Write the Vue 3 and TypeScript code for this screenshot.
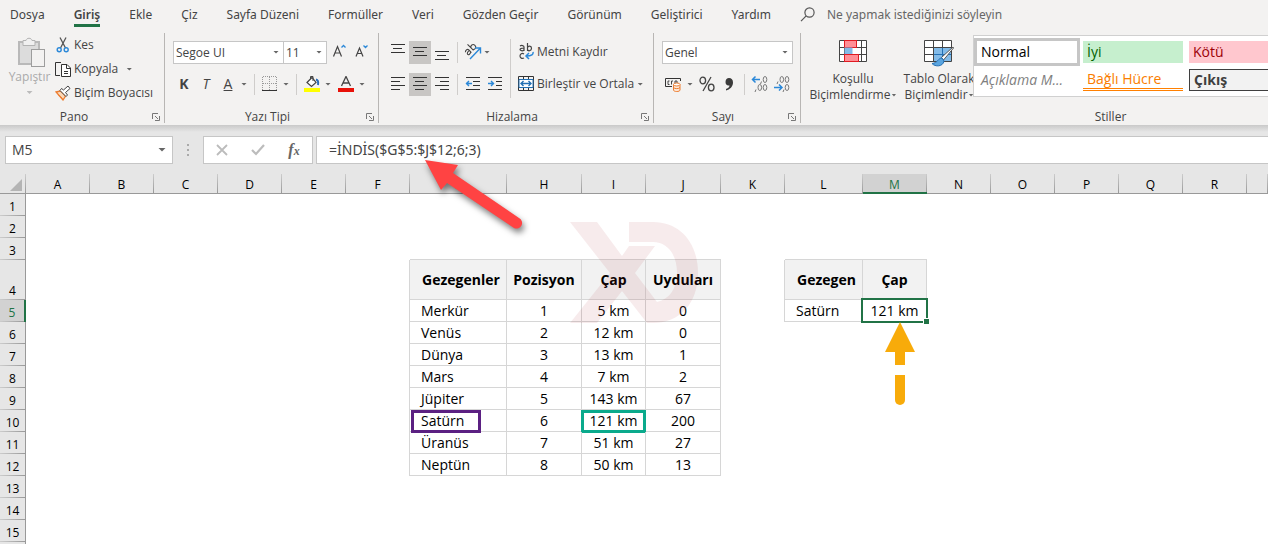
<script setup lang="ts">
import { ref } from 'vue'

const tabs: string[] = [
  'Dosya', 'Giriş', 'Ekle', 'Çiz', 'Sayfa Düzeni', 'Formüller', 'Veri',
  'Gözden Geçir', 'Görünüm', 'Geliştirici', 'Yardım',
]
const activeTab = ref('Giriş')

const nameBox = ref('M5')
const formula = ref('=İNDİS($G$5:$J$12;6;3)')

const columns = 'ABCDEFGHIJKLMNOPQRS'.split('')
const rowCount = 16

const cells: Record<string, string> = {
  G4: 'Gezegenler', H4: 'Pozisyon', I4: 'Çap', J4: 'Uyduları',
  L4: 'Gezegen', M4: 'Çap', L5: 'Satürn', M5: '121 km',
}
const planets: [string, number, string, number][] = [
  ['Merkür', 1, '5 km', 0],
  ['Venüs', 2, '12 km', 0],
  ['Dünya', 3, '13 km', 1],
  ['Mars', 4, '7 km', 2],
  ['Jüpiter', 5, '143 km', 67],
  ['Satürn', 6, '121 km', 200],
  ['Üranüs', 7, '51 km', 27],
  ['Neptün', 8, '50 km', 13],
]
planets.forEach((planet, i) => {
  planet.forEach((value, j) => {
    cells['GHIJ'[j] + (5 + i)] = String(value)
  })
})

const between = (v: string, a: string, b: string) => v >= a && v <= b

function cellClasses(col: string, row: number) {
  const id = col + row
  return {
    'line-right':
      (between(col, 'F', 'J') && row >= 4 && row <= 12) ||
      (between(col, 'K', 'M') && (row === 4 || row === 5)),
    'line-bottom':
      (between(col, 'G', 'J') && row >= 3 && row <= 12) ||
      (between(col, 'L', 'M') && row >= 3 && row <= 5),
    title: row === 4 && id in cells,
    name: col === 'G' || col === 'L',
    'mark-name': id === 'G10',
    'mark-value': id === 'I10',
    selected: id === nameBox.value,
  }
}
</script>

<template>
  <div class="app">
    <nav class="tabs" aria-label="Şerit sekmeleri">
      <button
        v-for="tab in tabs"
        :key="tab"
        type="button"
        class="tab"
        :class="{ active: tab === activeTab }"
        @click="activeTab = tab"
      >{{ tab }}</button>
      <label class="tell-me">
        <svg width="16" height="16" viewBox="0 0 16 16" fill="none" stroke="#555" stroke-width="1.2">
          <circle cx="9.5" cy="5.5" r="4.6" /><path d="M6.2 8.8L1 14.2" />
        </svg>
        <input type="text" placeholder="Ne yapmak istediğinizi söyleyin" aria-label="Ne yapmak istediğinizi söyleyin">
      </label>
    </nav>

    <div class="ribbon">
      <section class="group clipboard">
        <div class="body">
          <button type="button" class="paste" disabled>
            <svg width="30" height="32" viewBox="0 0 30 32" fill="none">
              <rect x="4" y="5" width="20" height="22" fill="#dcdcdc" stroke="#b9b9b9" stroke-width="2" />
              <path d="M8 3.500H11C11.500 0.500 16.500 0.500 17 3.500H20V8.500H8Z" fill="#f0f0f0" stroke="#b3b3b3" />
              <rect x="16.500" y="12.500" width="13" height="17" fill="#f3f2f1" stroke="#9d9d9d" />
            </svg>
            <span>Yapıştır</span>
            <i class="caret"></i>
          </button>
          <div class="stack">
            <button type="button" class="cmd">
              <svg width="16" height="16" viewBox="0 0 16 16" fill="none">
                <path d="M5 0.500L10.500 11M11 0.500L5.500 11" stroke="#555" stroke-width="1.300" />
                <circle cx="4.200" cy="12.700" r="2" stroke="#2b88d8" stroke-width="1.400" />
                <circle cx="11.200" cy="12.700" r="2" stroke="#2b88d8" stroke-width="1.400" />
              </svg>
              Kes
            </button>
            <button type="button" class="cmd">
              <svg width="16" height="16" viewBox="0 0 16 16" fill="none" stroke="#333">
                <path d="M6 1.500H0.500V14.500H5" />
                <path d="M6.500 3.500H12L15.500 7V15.500H6.500Z" fill="#fff" />
                <path d="M11.500 3.500V7.500H15.500M9 10.500H13M9 12.500H13" />
              </svg>
              Kopyala <i class="caret wide"></i>
            </button>
            <button type="button" class="cmd">
              <svg width="16" height="16" viewBox="0 0 16 16" fill="none">
                <path d="M1 7L5.500 6L10.500 11L8 15Z" fill="#fbd9b8" stroke="#ed7d31" stroke-width="1.300" />
                <path d="M3 9.500L7.500 13.500" stroke="#ed7d31" />
                <path d="M5 5.500L11 11.500L12.500 10L10.500 7.500L15 3.500L13 1L8.500 5L6.500 3.500Z" fill="#fff" stroke="#444" />
              </svg>
              Biçim Boyacısı
            </button>
          </div>
        </div>
        <footer><span>Pano</span><button type="button" class="launcher" aria-label="Pano ayarları"><svg width="8" height="8" viewBox="0 0 8 8" fill="none" stroke="#777"><path d="M0.500 6V0.500H6M3 3L6 6M7.500 3V7.500H3" /></svg></button></footer>
      </section>

      <section class="group font">
        <div class="body rows">
          <div class="row">
            <span class="combo face"><select aria-label="Yazı tipi"><option>Segoe UI</option></select><i class="caret"></i></span>
            <span class="combo size"><select aria-label="Yazı boyutu"><option>11</option></select><i class="caret"></i></span>
            <button type="button" class="tool grow" aria-label="Büyüt">
              <svg width="16" height="16" viewBox="0 0 16 16" fill="none"><path d="M1.500 12.500L5.500 2.500L9.500 12.500M3 9H8" stroke="#444" stroke-width="1.200" /><path d="M9.500 3.500L11.500 1.500L13.500 3.500" stroke="#2b88d8" stroke-width="1.300" /></svg>
            </button>
            <button type="button" class="tool" aria-label="Küçült">
              <svg width="16" height="16" viewBox="0 0 16 16" fill="none"><path d="M2 12.500L5.500 4L9 12.500M3.500 9.500H7.500" stroke="#444" stroke-width="1.200" /><path d="M9.500 1.500L11.500 3.500L13.500 1.500" stroke="#2b88d8" stroke-width="1.300" /></svg>
            </button>
          </div>
          <div class="row">
            <button type="button" class="tool letter"><b>K</b></button>
            <button type="button" class="tool letter"><em>T</em></button>
            <button type="button" class="tool letter"><u>A</u></button>
            <i class="caret drop"></i>
            <i class="sep"></i>
            <button type="button" class="tool" aria-label="Kenarlıklar">
              <svg width="16" height="16" viewBox="0 0 16 16" fill="none"><path d="M1 0.500H15M0.500 1V14M14.500 1V14M7.500 1V14M1 7.500H15" stroke="#999" stroke-dasharray="1 1" /><path d="M0 14.500H15" stroke="#333" /></svg>
            </button>
            <i class="caret drop"></i>
            <i class="sep"></i>
            <button type="button" class="tool" aria-label="Dolgu rengi">
              <svg width="16" height="16" viewBox="0 0 16 16" fill="none"><path d="M3 6.500L8 1.500L12 6.500L7.500 10.500Z" fill="#fff" stroke="#444" stroke-width="1.200" /><path d="M6.500 3V0.500H9V5" stroke="#444" /><path d="M12 3.500C14.500 4 14.500 6 14 9" stroke="#2b6cb8" stroke-width="2" /><rect y="12" width="16" height="4" fill="#ff0" /></svg>
            </button>
            <i class="caret drop"></i>
            <button type="button" class="tool" aria-label="Yazı rengi">
              <svg width="16" height="16" viewBox="0 0 16 16" fill="none"><path d="M3.500 10L8 0.500L12.500 10M5 7H11" stroke="#444" stroke-width="1.300" /><rect y="12" width="16" height="4" fill="#e81109" /></svg>
            </button>
            <i class="caret drop"></i>
          </div>
        </div>
        <footer><span>Yazı Tipi</span><button type="button" class="launcher" aria-label="Yazı tipi ayarları"><svg width="8" height="8" viewBox="0 0 8 8" fill="none" stroke="#777"><path d="M0.500 6V0.500H6M3 3L6 6M7.500 3V7.500H3" /></svg></button></footer>
      </section>

      <section class="group align">
        <div class="body">
          <div class="rows">
            <div class="row">
              <button type="button" class="tool" aria-label="Üste hizala"><svg width="16" height="18" viewBox="0 0 16 18" stroke="#333"><path d="M1 1.500H15M3 5.500H12M1 9.500H15" /></svg></button>
              <button type="button" class="tool on" aria-label="Ortaya hizala"><svg width="16" height="18" viewBox="0 0 16 18" stroke="#333"><path d="M1 4.500H15M3 8.500H12M1 12.500H15" /></svg></button>
              <button type="button" class="tool" aria-label="Alta hizala"><svg width="16" height="18" viewBox="0 0 16 18" stroke="#333"><path d="M1 8.500H15M3 12.500H12M1 16.500H15" /></svg></button>
              <i class="sep"></i>
              <button type="button" class="tool" aria-label="Yönlendirme">
                <svg width="18" height="18" viewBox="0 0 18 18" fill="none"><g transform="rotate(-45 6 6)" stroke="#444" stroke-width="1.100"><path d="M0.500 5C2 3.500 4.500 4 4.500 5.500V9.500M4.500 6.500C2 6.500 0.500 7 0.500 8.200S3 10 4.500 8.500" /><path d="M7.500 1V9.500M7.500 6C8.500 3.500 12 4 12 7S8.500 10 7.500 8" /></g><path d="M6 16L16 5.500M11 5H16.500V10.500" stroke="#2b88d8" stroke-width="1.400" /></svg>
              </button>
              <i class="caret"></i>
            </div>
            <div class="row">
              <button type="button" class="tool" aria-label="Sola hizala"><svg width="16" height="16" viewBox="0 0 16 16" stroke="#333"><path d="M1 1.500H15M1 5.500H10M1 9.500H15M1 13.500H10" /></svg></button>
              <button type="button" class="tool on" aria-label="Ortala"><svg width="16" height="16" viewBox="0 0 16 16" stroke="#333"><path d="M1 1.500H15M3 5.500H12M1 9.500H15M3 13.500H12" /></svg></button>
              <button type="button" class="tool" aria-label="Sağa hizala"><svg width="16" height="16" viewBox="0 0 16 16" stroke="#333"><path d="M1 1.500H15M6 5.500H15M1 9.500H15M6 13.500H15" /></svg></button>
              <i class="sep"></i>
              <button type="button" class="tool" aria-label="Girintiyi azalt"><svg width="16" height="16" viewBox="0 0 16 16" fill="none" stroke="#333"><path d="M1 1.500H15M8 5.500H15M8 9.500H15M1 13.500H15" /><path d="M1 7.500H7M4 5L1.500 7.500L4 10" stroke="#2b88d8" stroke-width="1.400" /></svg></button>
              <button type="button" class="tool" aria-label="Girintiyi artır"><svg width="16" height="16" viewBox="0 0 16 16" fill="none" stroke="#333"><path d="M1 1.500H15M9 5.500H15M9 9.500H15M1 13.500H15" /><path d="M1 7.500H7M4 5L6.500 7.500L4 10" stroke="#2b88d8" stroke-width="1.400" /></svg></button>
            </div>
          </div>
          <i class="sep tall"></i>
          <div class="rows">
            <button type="button" class="row cmd">
              <svg width="16" height="18" viewBox="0 0 16 18" fill="none"><path d="M2 3C3.500 2 6 2.500 6 4V8M6 5C3.500 5 2 5.500 2 6.500S4.500 8.500 6 7M9.500 0V8M9.500 5C10 2.500 13.500 2.500 13.500 5.300S10 8.500 9.500 6.500M6 11C4 9.500 2 11 2 13S4 16 6 15" stroke="#444" stroke-width="1.200" /><path d="M15 9C15.500 11.500 14 13 8 13M11 10L8 13L11 16" stroke="#2b88d8" stroke-width="1.500" /></svg>
              Metni Kaydır
            </button>
            <button type="button" class="row cmd">
              <svg width="16" height="16" viewBox="0 0 16 16" fill="none"><path d="M0.500 0.500H15.500V14.500H0.500ZM5.500 0.500V3M10.500 0.500V3M5.500 12V14.500M10.500 12V14.500" stroke="#333" /><path d="M1 3.500H15V11.500H1Z" fill="#fff" stroke="#2470b3" /><path d="M3 7.500H13M5.500 5L3 7.500L5.500 10M10.500 5L13 7.500L10.500 10" stroke="#2470b3" stroke-width="1.400" /></svg>
              Birleştir ve Ortala <i class="caret"></i>
            </button>
          </div>
        </div>
        <footer><span>Hizalama</span><button type="button" class="launcher" aria-label="Hizalama ayarları"><svg width="8" height="8" viewBox="0 0 8 8" fill="none" stroke="#777"><path d="M0.500 6V0.500H6M3 3L6 6M7.500 3V7.500H3" /></svg></button></footer>
      </section>

      <section class="group number">
        <div class="body rows">
          <div class="row">
            <span class="combo format"><select aria-label="Sayı biçimi"><option>Genel</option></select><i class="caret"></i></span>
          </div>
          <div class="row">
            <button type="button" class="tool" aria-label="Finansal biçim">
              <svg width="18" height="16" viewBox="0 0 18 16" fill="none"><path d="M8 10.500H1.500V2.500H16.500V5" stroke="#333" /><path d="M5.500 5H4V8.500H5.500M7.500 8.500V5H9M11 8V5H13V7" stroke="#444" /><path d="M9.500 8.500V14C9.500 16 16 16 16 14V8.500" fill="#fde9d9" stroke="#ed7d31" /><ellipse cx="12.750" cy="8.500" rx="3.250" ry="1.500" fill="#fff" stroke="#ed7d31" /><path d="M9.500 11.500C10.500 13 15 13 16 11.500" stroke="#ed7d31" /></svg>
            </button>
            <i class="caret drop"></i>
            <button type="button" class="tool" aria-label="Yüzde">
              <svg width="16" height="16" viewBox="0 0 16 16" fill="none" stroke="#444" stroke-width="1.300"><ellipse cx="3.800" cy="4.500" rx="2.800" ry="3.300" /><ellipse cx="12.200" cy="11.500" rx="2.800" ry="3.300" /><path d="M12 1L4 15" /></svg>
            </button>
            <button type="button" class="tool" aria-label="Binlik ayırıcı">
              <svg width="10" height="14" viewBox="0 0 10 14"><path d="M5 1C7.500 1 9 2.500 9 5.500C9 9.500 6 12.500 2 13.500V12C4.500 11 5.500 10 5.500 8.500C3 9 1.500 7.500 1.500 5C1.500 2.500 3 1 5 1Z" fill="#3b3b3b" /></svg>
            </button>
            <i class="sep"></i>
            <button type="button" class="tool" aria-label="Ondalık artır">
              <svg width="18" height="18" viewBox="0 0 18 18" fill="none" stroke="#777"><ellipse cx="14" cy="4.500" rx="1.800" ry="3" /><ellipse cx="8.800" cy="12.500" rx="1.800" ry="3" /><ellipse cx="14" cy="12.500" rx="1.800" ry="3" /><path d="M5 14.500L4 17M10.500 6.500L9.500 9" /><path d="M1.500 4.500H9M4.500 1.500L1.500 4.500L4.500 7.500" stroke="#2b88d8" stroke-width="1.500" /></svg>
            </button>
            <button type="button" class="tool" aria-label="Ondalık azalt">
              <svg width="18" height="18" viewBox="0 0 18 18" fill="none" stroke="#777"><ellipse cx="8.800" cy="4.500" rx="1.800" ry="3" /><ellipse cx="14" cy="4.500" rx="1.800" ry="3" /><ellipse cx="14" cy="12.500" rx="1.800" ry="3" /><path d="M5 6.500L4 9M11 14.500L10 17" /><path d="M1 12.500H9M6 9.500L9 12.500L6 15.500" stroke="#2b88d8" stroke-width="1.500" /></svg>
            </button>
          </div>
        </div>
        <footer><span>Sayı</span><button type="button" class="launcher" aria-label="Sayı ayarları"><svg width="8" height="8" viewBox="0 0 8 8" fill="none" stroke="#777"><path d="M0.500 6V0.500H6M3 3L6 6M7.500 3V7.500H3" /></svg></button></footer>
      </section>

      <section class="group styles">
        <div class="body">
          <button type="button" class="big">
            <svg width="28" height="27" viewBox="0 0 28 27" fill="none"><path d="M0.500 0.500H27.500V21.500H0.500ZM0.500 7.500H27.500M0.500 14.500H27.500M5.500 0V22M22.500 0V22" fill="#fff" stroke="#444" /><rect x="5.500" y="0.500" width="12" height="7" fill="#ff8f96" stroke="#e01b22" /><rect x="5.500" y="7.500" width="8" height="7" fill="#83bbe8" /><rect x="5.500" y="14.500" width="14" height="7" fill="#ff8f96" stroke="#e01b22" /></svg>
            <span>Koşullu</span>
            <span>Biçimlendirme <i class="caret"></i></span>
          </button>
          <button type="button" class="big second">
            <svg width="30" height="27" viewBox="0 0 30 27" fill="none"><path d="M0.500 0.500H27.500V21.500H0.500Z" fill="#fff" /><path d="M9.500 7.500H27.500V21.500H9.500Z" fill="#83bbe8" /><path d="M9.500 7.500H27.500M9.500 14.500H27.500M18.500 7.500V21.500" stroke="#2470b3" /><path d="M0.500 0.500H27.500V21.500H0.500ZM0.500 7.500H27.500M0.500 14.500H9M9.500 0V22M18.500 0V7" stroke="#444" /><path d="M29 7L17.500 17.500L19.500 20L29.500 8Z" fill="#fff" stroke="#555" /><path d="M18 18C14 18 14 23 8 23.500C11 27 19 27 20 21Z" fill="#5aa5e0" stroke="#2470b3" /></svg>
            <span>Tablo Olarak</span>
            <span>Biçimlendir <i class="caret"></i></span>
          </button>
          <div class="gallery">
            <button type="button" class="swatch normal">Normal</button>
            <button type="button" class="swatch good">İyi</button>
            <button type="button" class="swatch bad">Kötü</button>
            <button type="button" class="swatch note">Açıklama M...</button>
            <button type="button" class="swatch linked">Bağlı Hücre</button>
            <button type="button" class="swatch output">Çıkış</button>
          </div>
        </div>
        <footer><span>Stiller</span></footer>
      </section>
    </div>

    <div class="formula-bar">
      <div class="name-box">
        <input v-model="nameBox" type="text" aria-label="Ad kutusu">
        <button type="button" aria-label="Adları göster"><i class="caret large"></i></button>
      </div>
      <svg class="grip" width="2" height="12" viewBox="0 0 2 12" fill="#aaa"><path d="M0 0H2V2H0ZM0 5H2V7H0ZM0 10H2V12H0Z" /></svg>
      <div class="edit-buttons">
        <button type="button" aria-label="İptal"><svg width="12" height="12" viewBox="0 0 12 12" stroke="#bcbcbc" stroke-width="1.800"><path d="M1 1L11 11M11 1L1 11" /></svg></button>
        <button type="button" aria-label="Gir"><svg width="14" height="12" viewBox="0 0 14 12" fill="none" stroke="#bcbcbc" stroke-width="2.200"><path d="M1 6L5 10L13 1" /></svg></button>
        <button type="button" class="fx" aria-label="İşlev ekle">f<small>x</small></button>
      </div>
      <input v-model="formula" class="formula" type="text" aria-label="Formül çubuğu" spellcheck="false">
    </div>

    <div class="sheet">
      <table>
        <colgroup>
          <col class="c-head">
          <col v-for="c in columns" :key="c" :class="'c-' + c">
        </colgroup>
        <thead>
          <tr>
            <th class="corner"><svg width="12" height="12" viewBox="0 0 12 12"><path d="M12 0V12H0Z" fill="#b4b4b4" /></svg></th>
            <th v-for="c in columns" :key="c" scope="col" :class="{ current: nameBox === c + '5' }">{{ c === 'S' ? '' : c }}</th>
          </tr>
        </thead>
        <tbody>
          <tr v-for="r in rowCount" :key="r" :class="{ tall: r === 4 }">
            <th scope="row" :class="{ current: r === 5 }">{{ r === 16 ? '' : r }}</th>
            <td v-for="c in columns" :key="c" :class="cellClasses(c, r)">{{ cells[c + r] }}</td>
          </tr>
        </tbody>
      </table>

      <svg class="watermark" width="128" height="101" viewBox="0 0 128 101">
        <path d="M0 0H27L52 34L59 24H85L65 51L87 80C100 77 107 66 107 51C107 32 97 20 83 20H59V0H83C111 0 128 22 128 51C128 80 111 101 83 101H77L52 69L27 101H0L40 51Z" fill="#a81c2c" fill-opacity="0.090" />
      </svg>
      <svg class="up-arrow" width="30" height="84" viewBox="0 0 30 84" fill="#f8ab0a">
        <path d="M15 0L30 30H20V43H10V30H0Z" />
        <path d="M10 53H20V78A5 5 0 0 1 10 78Z" />
      </svg>
    </div>

    <svg class="red-arrow" width="110" height="86" viewBox="0 0 110 86">
      <path d="M5 5L38 10L33 18L99 63A5.500 5.500 0 0 1 94 73L27 28L21 35Z" fill="#ff4343" />
    </svg>
  </div>
</template>

<style>
html, body { margin: 0; }
</style>

<style scoped>
.app {
  position: relative;
  display: flex;
  flex-direction: column;
  height: 100vh;
  overflow: hidden;
  background: #e6e6e6;
  color: #444;
  font: 12px/16px "Open Sans", "Noto Sans", sans-serif;
}
.app *, .app *::after { box-sizing: border-box; }
button, input, select { font: inherit; color: inherit; margin: 0; padding: 0; border: 0; background: none; outline: 0; }
svg { display: block; flex: none; }
.caret {
  flex: none;
  display: inline-block;
  width: 6px;
  height: 3px;
  background: #666;
  clip-path: polygon(0 0, 100% 0, 50% 100%);
}
.caret.large { width: 8px; height: 4px; }
.caret.wide { margin-left: 5px; }
.caret.drop { margin: 0 3px; }

.tabs {
  display: flex;
  align-items: stretch;
  flex: none;
  height: 33px;
  padding-bottom: 6px;
  background: #f3f2f1;
  font-family: "Noto Sans", "Open Sans", sans-serif;
  white-space: nowrap;
}
.tab { padding: 5px 0 0; margin-left: 29px; border-bottom: 3px solid transparent; flex: none; }
.tab:first-child { margin-left: 10px; }
.tab.active { font-weight: 600; border-color: #217346; }
.tell-me { display: flex; align-items: center; flex: 1; gap: 11px; margin-left: 29px; padding-top: 3px; }
.tell-me input { flex: 1; min-width: 0; }
.tell-me input::placeholder { color: #666; opacity: 1; }

.ribbon { display: flex; flex: none; height: 92px; padding-bottom: 2px; overflow: hidden; background: #f3f2f1; }
.group { display: flex; flex-direction: column; flex: none; border-right: 1px solid #b8b6b4; }
.body { display: flex; flex: 1; white-space: nowrap; }
.rows { display: flex; flex-direction: column; padding-top: 3px; }
.row { display: flex; align-items: center; height: 32px; }
footer { display: flex; align-items: center; height: 12px; padding-right: 4px; }
footer span { flex: 1; text-align: center; }
.launcher { width: 8px; margin-left: 4px; }
.tool { display: flex; align-items: center; justify-content: center; width: 22px; height: 23px; flex: none; }
.tool.on { background: #c8c6c4; }
.sep { flex: none; width: 1px; height: 21px; margin: 0 4px; background: #cfcdcb; }
.sep.tall { height: 59px; margin: 6px 7px 0 4px; }
.cmd { display: flex; align-items: center; gap: 3px; text-align: left; }

.clipboard { width: 165px; }
.paste { display: flex; flex-direction: column; align-items: center; width: 55px; padding: 4px 0 0 4px; color: #aaa; }
.paste .caret { margin-top: 6px; background: #bbb; }
.stack { display: flex; flex-direction: column; }
.stack .cmd { height: 24px; }

.font { width: 214px; padding-left: 8px; }
.combo { position: relative; display: flex; align-items: center; height: 23px; background: #fff; border: 1px solid #c6c6c6; }
.combo select { appearance: none; width: 100%; padding: 1px 0 0 2px; }
.combo .caret { position: absolute; right: 4px; pointer-events: none; }
.face { width: 111px; }
.size { width: 44px; margin-left: -1px; }
.grow { margin-left: 2px; }
.font .sep { margin: 0 4px 0 3px; }
.font .row .tool + .caret { margin: 0 4px 0 2px; }
.font .letter { font-size: 14px; }
.align { width: 275px; padding-left: 8px; }
.number { width: 147px; padding-left: 8px; }
.format { width: 131px; }

.styles { width: 623px; border: 0; }
.big { display: flex; flex: none; flex-direction: column; align-items: center; width: 104px; padding-top: 7px; }
.big svg { margin-bottom: 4px; }
.big span { display: flex; align-items: center; gap: 1px; }
.big .caret { width: 5px; }
.big.second { width: 68px; }
.gallery {
  display: grid;
  flex: none;
  grid-template: 22px 22px / repeat(4, 100px);
  gap: 6px;
  height: 62px;
  margin-top: 2px;
  padding: 5px 3px;
  background: #fff;
  border: 1px solid #d0d0d0;
}
.swatch { padding-left: 4px; font-size: 14px; line-height: 20px; text-align: left; }
.normal { color: #000; outline: 3px solid #c6c6c6; }
.good { background: #c6efce; color: #006100; }
.bad { background: #ffc7ce; color: #9c0006; }
.note { color: #7f7f7f; font-style: italic; grid-column: 1; }
.linked { color: #fa7d00; border-bottom: 3px double #ff8001; line-height: 18px; }
.output { background: #f2f2f2; border: 1px solid #3f3f3f; color: #3f3f3f; font-weight: 700; }

.formula-bar {
  display: flex;
  align-items: center;
  flex: none;
  height: 49px;
  padding: 0 0 0 5px;
  background: linear-gradient(#c9c9c9, #e6e6e6 7px);
}
.formula-bar > * { height: 28px; }
.name-box { display: flex; width: 168px; background: #fff; border: 1px solid #c6c6c6; font-size: 14px; }
.name-box input { flex: 1; min-width: 0; padding-left: 6px; }
.name-box button { width: 20px; display: flex; align-items: center; justify-content: center; }
.formula-bar > .grip { height: 12px; margin: 0 14px; }
.edit-buttons { display: flex; width: 110px; margin-right: 3px; background: #fff; border: 1px solid #c6c6c6; }
.edit-buttons button { flex: 1; display: flex; align-items: center; justify-content: center; }
.edit-buttons .fx { font: italic bold 16px/16px "Liberation Serif", serif; color: #666; }
.fx small { font-size: 12px; padding-top: 3px; }
.formula {
  flex: 1;
  min-width: 0;
  padding-left: 12px;
  background: #fff;
  border: 1px solid #c6c6c6;
  border-right: 0;
  font-family: "Noto Sans", "Open Sans", sans-serif;
  font-size: 14px;
}

.sheet { position: relative; flex: 1; min-height: 0; overflow: hidden; background: #fff; }
table { width: 100%; table-layout: fixed; border-collapse: separate; border-spacing: 0; color: #000; }
col { width: 64px; }
.c-head { width: 26px; }
.c-G { width: 97px; }
.c-H, .c-J { width: 75px; }
.c-L { width: 78px; }
.c-S { width: auto; }
th, td { padding: 0; white-space: nowrap; position: relative; }
th { font-weight: 400; background-color: #e6e6e6; }
thead th {
  height: 20px;
  padding: 3px 1px 0 0;
  border-bottom: 1px solid #999;
  line-height: 16px;
  background-image: linear-gradient(#ccc, #999);
  background-size: 1px 100%;
  background-position: right;
  background-repeat: no-repeat;
}
.corner svg { margin-left: 10px; }
tbody tr { height: 22px; }
tbody tr.tall { height: 40px; }
tbody th {
  vertical-align: bottom;
  line-height: 18px;
  border-right: 1px solid #999;
  background-image: linear-gradient(90deg, #ccc, #999);
  background-size: 100% 1px;
  background-position: bottom;
  background-repeat: no-repeat;
}
th.current { background-color: #d2d2d2; color: #217346; }
thead th.current { border-bottom: 2px solid #217346; line-height: 15px; }
tbody th.current { border-right: 2px solid #217346; }
td { font-size: 14px; line-height: 20px; text-align: center; border: 0 solid #d6d6d6; }
td.name { text-align: left; padding-left: 11px; }
td.title { font-weight: 700; background: #f2f2f2; }
td.title.name { padding-left: 12px; }
.line-right { border-right-width: 1px; }
.line-bottom { border-bottom-width: 1px; }
.mark-name::after, .mark-value::after, .selected::after { content: ""; position: absolute; }
.mark-name::after { left: 1px; top: 0; width: 70px; height: 23px; border: 3px solid #5b2082; }
.mark-value::after { left: -1px; top: 0; width: 65px; height: 23px; border: 3px solid #0aaa8c; }
.selected::after { left: -2px; top: -2px; width: 67px; height: 25px; border: 2px solid #217346; }
.selected::before { content: ""; position: absolute; z-index: 1; right: -3px; bottom: -3px; width: 6px; height: 6px; background: #217346; border: solid #fff; border-width: 1px 0 0 1px; box-sizing: border-box; }
.watermark { position: absolute; left: 570px; top: 48px; pointer-events: none; }
.up-arrow { position: absolute; left: 885px; top: 148px; }
.red-arrow { position: absolute; left: 420px; top: 155px; overflow: visible; pointer-events: none; filter: drop-shadow(2px 4px 3px rgba(0, 0, 0, 0.5)); }
</style>
